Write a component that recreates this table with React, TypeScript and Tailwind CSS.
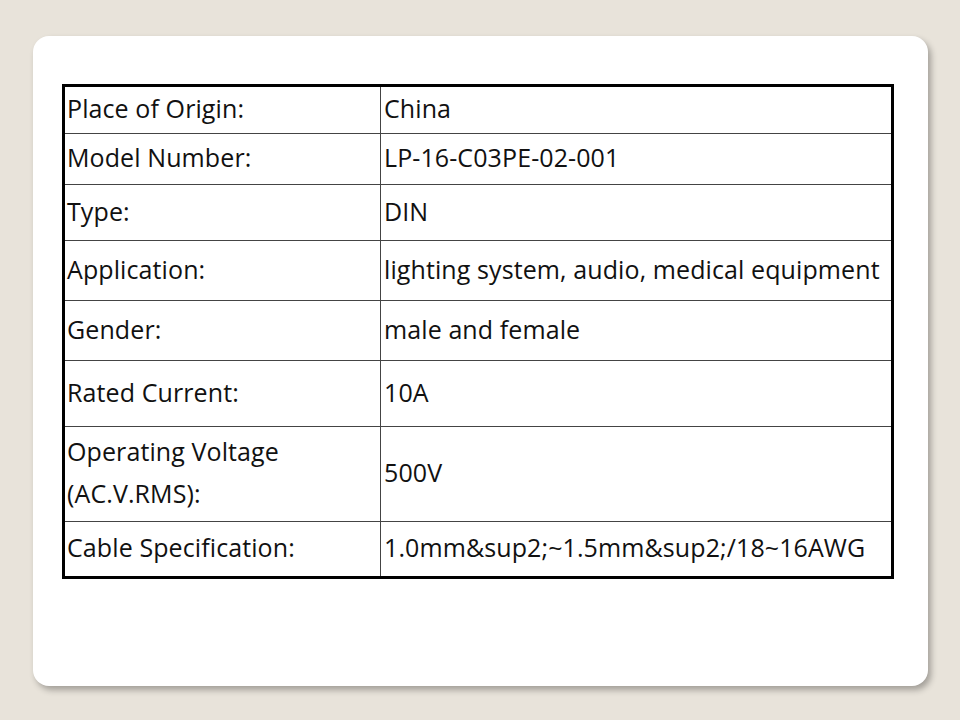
const rows: { label: string; value: string; h: string }[] = [
  { label: "Place of Origin:", value: "China", h: "h-[48px]" },
  { label: "Model Number:", value: "LP-16-C03PE-02-001", h: "h-[51px]" },
  { label: "Type:", value: "DIN", h: "h-[56px]" },
  { label: "Application:", value: "lighting system, audio, medical equipment", h: "h-[60px]" },
  { label: "Gender:", value: "male and female", h: "h-[60px]" },
  { label: "Rated Current:", value: "10A", h: "h-[66px]" },
  { label: "Operating Voltage (AC.V.RMS):", value: "500V", h: "h-[95px]" },
  { label: "Cable Specification:", value: "1.0mm&sup2;~1.5mm&sup2;/18~16AWG", h: "h-[56px]" },
];

export default function App() {
  return (
    <div className="min-h-[720px] w-full bg-[#e8e3da] pt-[36px] pl-[33px]">
      <div className="w-[895px] h-[650px] rounded-[16px] bg-white shadow-[3px_4px_6px_rgba(0,0,0,0.3)] pt-[48px] pl-[29px]">
        <table
          className="w-[832px] border-collapse border-[3px] border-black text-[25px] tracking-[0.1px] text-[#111] leading-[42px]"
          style={{ fontFamily: '"Open Sans", sans-serif' }}
        >
          <tbody>
            {rows.map((r) => (
              <tr key={r.label} className={r.h}>
                <td className="w-[317px] border border-[#444] px-[2px] pb-[4px] align-middle">
                  {r.label === "Operating Voltage (AC.V.RMS):" ? (
                    <>
                      Operating Voltage
                      <br />
                      (AC.V.RMS):
                    </>
                  ) : (
                    r.label
                  )}
                </td>
                <td className="border border-[#444] px-[3px] pb-[4px] align-middle">{r.value}</td>
              </tr>
            ))}
          </tbody>
        </table>
      </div>
    </div>
  );
}
